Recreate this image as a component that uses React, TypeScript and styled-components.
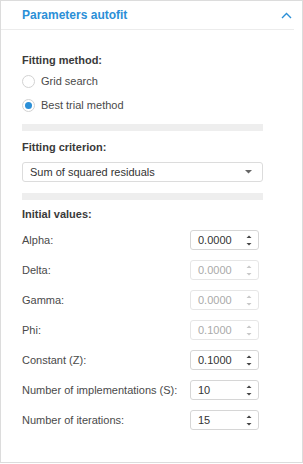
import React from 'react'
import styled, { createGlobalStyle } from 'styled-components'

const GlobalStyle = createGlobalStyle`
    html, body {
        margin: 0;
        padding: 0;
        background: #ffffff;
    }
    body {
        font-family: 'Liberation Sans', Arial, sans-serif;
        font-size: 11px;
        color: #4a4a4a;
    }
`

const Panel = styled.div`
    box-sizing: border-box;
    width: 303px;
    height: 463px;
    border: 1px solid #dcdcdc;
    background: #ffffff;
`

const Header = styled.div`
    display: flex;
    align-items: center;
    justify-content: space-between;
    height: 28px;
    margin-right: 8px;
    padding-left: 21px;
    padding-right: 2px;
    border-bottom: 1px solid #ececec;
`

const Title = styled.span`
    font-size: 12px;
    font-weight: bold;
    color: #2b8fd7;
`

const Content = styled.div`
    display: flex;
    flex-direction: column;
    width: 241px;
    padding: 23px 0 0 21px;
`

const Heading = styled.div<{ $top?: number }>`
    margin-top: ${({ $top }) => $top ?? 0}px;
    height: 14px;
    line-height: 14px;
    font-weight: bold;
    color: #3a3a3a;
`

const RadioGroup = styled.div`
    display: flex;
    flex-direction: column;
    margin-top: 2px;
`

const RadioRow = styled.label`
    display: flex;
    align-items: center;
    gap: 6px;
    height: 24px;
`

const RadioCircle = styled.span<{ $checked?: boolean }>`
    box-sizing: border-box;
    display: flex;
    align-items: center;
    justify-content: center;
    width: 13px;
    height: 13px;
    border: 1px solid #d2d2d2;
    border-radius: 50%;
    background: #ffffff;

    &::after {
        content: '';
        display: ${({ $checked }) => ($checked ? 'block' : 'none')};
        width: 7px;
        height: 7px;
        border-radius: 50%;
        background: #2b8fd7;
    }
`

const Divider = styled.div<{ $top: number }>`
    margin-top: ${({ $top }) => $top}px;
    height: 7px;
    background: #eeeeee;
`

const Select = styled.div`
    box-sizing: border-box;
    display: flex;
    align-items: center;
    justify-content: space-between;
    margin-top: 8px;
    height: 20px;
    padding: 0 10px 0 7px;
    border: 1px solid #dcdcdc;
    border-radius: 3px;
    color: #333333;
`

const Rows = styled.div`
    display: flex;
    flex-direction: column;
    gap: 10px;
    margin-top: 9px;
`

const Row = styled.div`
    display: grid;
    grid-template-columns: 168px 69px;
    align-items: center;
    height: 20px;
`

const Label = styled.span`
    white-space: nowrap;
`

const Spin = styled.div<{ $disabled?: boolean }>`
    box-sizing: border-box;
    display: flex;
    align-items: center;
    justify-content: space-between;
    height: 20px;
    padding: 0 6px 0 7px;
    border: 1px solid ${({ $disabled }) => ($disabled ? '#e6e6e6' : '#d6d6d6')};
    border-radius: 3px;
    color: ${({ $disabled }) => ($disabled ? '#aaaaaa' : '#333333')};
`

const ChevronUp = () => (
    <svg width="11" height="7" viewBox="0 0 11 7">
        <path d="M1 6 L5.5 1.5 L10 6" fill="none" stroke="#2b8fd7" strokeWidth="1.4" />
    </svg>
)

const Caret = () => (
    <svg width="7" height="4" viewBox="0 0 7 4">
        <path d="M0 0 H7 L3.5 3.5 Z" fill="#666666" />
    </svg>
)

const Arrows = ({ disabled }: { disabled?: boolean }) => (
    <svg width="6" height="13" viewBox="0 0 6 13">
        <path d="M0.5 4 L3 1.5 L5.5 4 Z" fill={disabled ? '#c8c8c8' : '#444444'} />
        <path d="M0.5 9 L3 11.5 L5.5 9 Z" fill={disabled ? '#c8c8c8' : '#444444'} />
    </svg>
)

const values = [
    { label: 'Alpha:', value: '0.0000' },
    { label: 'Delta:', value: '0.0000', disabled: true },
    { label: 'Gamma:', value: '0.0000', disabled: true },
    { label: 'Phi:', value: '0.1000', disabled: true },
    { label: 'Constant (Z):', value: '0.1000' },
    { label: 'Number of implementations (S):', value: '10' },
    { label: 'Number of iterations:', value: '15' },
]

const App = () => (
    <>
        <GlobalStyle />
        <Panel>
            <Header>
                <Title>Parameters autofit</Title>
                <ChevronUp />
            </Header>
            <Content>
                <Heading>Fitting method:</Heading>
                <RadioGroup>
                    <RadioRow>
                        <RadioCircle />
                        Grid search
                    </RadioRow>
                    <RadioRow>
                        <RadioCircle $checked />
                        Best trial method
                    </RadioRow>
                </RadioGroup>
                <Divider $top={7} />
                <Heading $top={9}>Fitting criterion:</Heading>
                <Select>
                    Sum of squared residuals
                    <Caret />
                </Select>
                <Divider $top={11} />
                <Heading $top={7}>Initial values:</Heading>
                <Rows>
                    {values.map((v) => (
                        <Row key={v.label}>
                            <Label>{v.label}</Label>
                            <Spin $disabled={v.disabled}>
                                {v.value}
                                <Arrows disabled={v.disabled} />
                            </Spin>
                        </Row>
                    ))}
                </Rows>
            </Content>
        </Panel>
    </>
)

export default App
